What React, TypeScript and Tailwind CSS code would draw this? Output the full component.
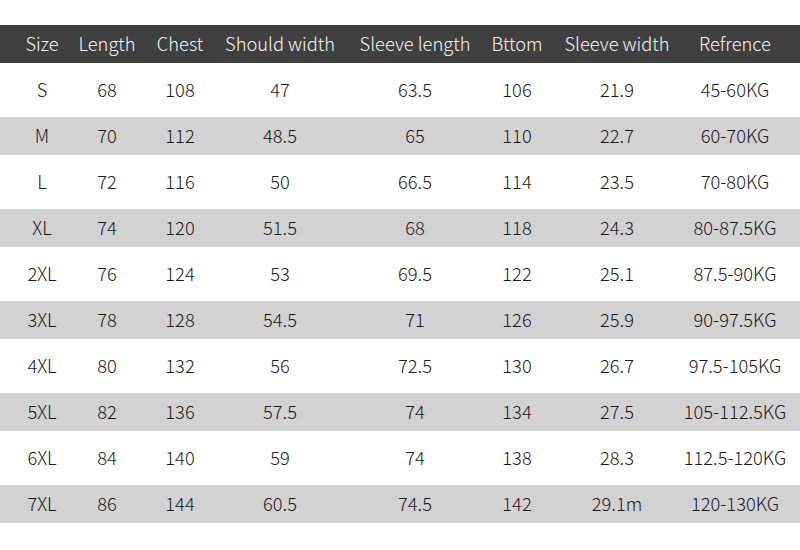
const headers = ["Size", "Length", "Chest", "Should width", "Sleeve length", "Bttom", "Sleeve width", "Refrence"];

const rows: string[][] = [
  ["S", "68", "108", "47", "63.5", "106", "21.9", "45-60KG"],
  ["M", "70", "112", "48.5", "65", "110", "22.7", "60-70KG"],
  ["L", "72", "116", "50", "66.5", "114", "23.5", "70-80KG"],
  ["XL", "74", "120", "51.5", "68", "118", "24.3", "80-87.5KG"],
  ["2XL", "76", "124", "53", "69.5", "122", "25.1", "87.5-90KG"],
  ["3XL", "78", "128", "54.5", "71", "126", "25.9", "90-97.5KG"],
  ["4XL", "80", "132", "56", "72.5", "130", "26.7", "97.5-105KG"],
  ["5XL", "82", "136", "57.5", "74", "134", "27.5", "105-112.5KG"],
  ["6XL", "84", "140", "59", "74", "138", "28.3", "112.5-120KG"],
  ["7XL", "86", "144", "60.5", "74.5", "142", "29.1m", "120-130KG"],
];

// column widths picked so each cell's centre lands on the chart's column centre
const cols = "grid grid-cols-[84px_46px_100px_100px_170px_34px_166px_70px]";

export default function App() {
  return (
    <div className="h-[550px] w-[800px] overflow-hidden bg-white pt-[25px] font-['Noto_Sans_CJK_SC','Noto_Sans',sans-serif] text-[18.3px] font-light">
      <div className={`${cols} h-[38px] bg-[#404040] text-[#f4f4f4]`}>
        {headers.map((h) => (
          <div key={h} className="flex items-center justify-center whitespace-nowrap pb-[1px]">
            {h}
          </div>
        ))}
      </div>
      {rows.map((r, i) => (
        <div
          key={r[0]}
          className={`${cols} ${i % 2 === 1 ? "h-[38px] bg-[#d2d2d2]" : "h-[54px] bg-white"} text-[#1a1a1a]`}
        >
          {r.map((c, j) => (
            <div key={j} className="flex items-center justify-center whitespace-nowrap pb-[1px]">
              {c}
            </div>
          ))}
        </div>
      ))}
    </div>
  );
}
